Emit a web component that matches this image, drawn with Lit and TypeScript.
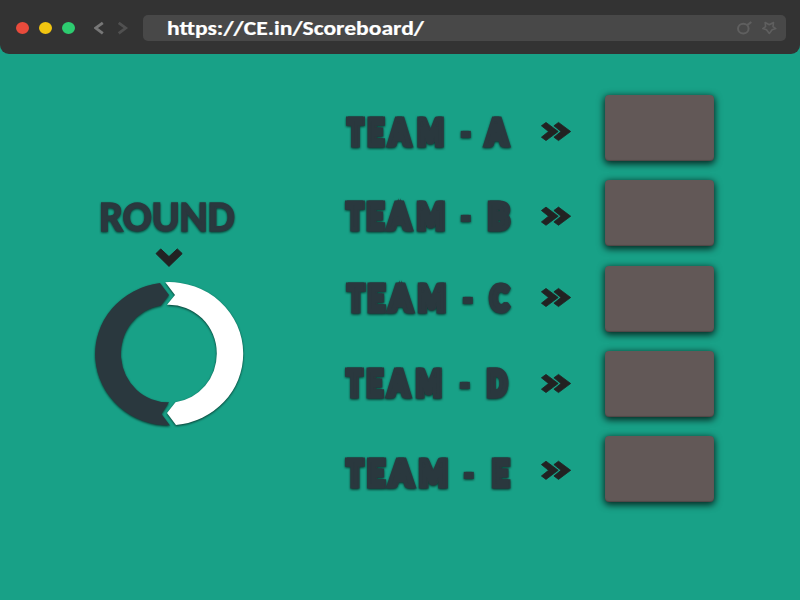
import { LitElement, html, svg, css } from "lit";
import { customElement, property } from "lit/decorators.js";

interface Team {
  letter: string;
  /** left edges and widths of T, E, A, M, the dash and the letter */
  glyphs: [number, number][];
  base: number;
  arrow: number;
}

const TEAMS: Team[] = [
  { letter: "A", base: 52, arrow: 27, glyphs: [[6, 19.5], [27.5, 17.8], [47, 26.5], [77.2, 26.5], [120.6, 11], [143.8, 27.4]] },
  { letter: "B", base: 51.6, arrow: 26.7, glyphs: [[5, 20.5], [26.5, 18.8], [46, 28], [76.7, 28], [120.6, 11], [147.6, 23.9]] },
  { letter: "C", base: 47, arrow: 22, glyphs: [[6, 20.5], [27.5, 18.8], [47, 28.5], [77.7, 28], [122.6, 11], [148.8, 22.7]] },
  { letter: "D", base: 47.5, arrow: 23, glyphs: [[5, 19.5], [26.5, 17.8], [46, 26.5], [75.7, 26], [119.6, 11], [146.6, 22.6]] },
  { letter: "E", base: 52.2, arrow: 24.8, glyphs: [[5, 20.5], [27, 19.3], [47, 29.5], [78.7, 29], [123.6, 11], [151.6, 18.9]] },
];

/** ink box of each Lato Black character, in em: left, width */
const INK: Record<string, [number, number]> = {
  T: [0.018, 0.58], E: [0.072, 0.456], A: [0.005, 0.722], M: [0.072, 0.782],
  "-": [0.043, 0.29], B: [0.072, 0.562], C: [0.036, 0.626], D: [0.072, 0.668],
};

const SIZE = 36.4;
const STROKE = 4.8;
/** sideways thickening that the name's first shadow adds */
const EXTRA = 2.4;

@customElement("browser-bar")
class BrowserBar extends LitElement {
  static styles = css`
    :host { display: flex; box-sizing: border-box; height: 54px; padding: 15px 14px 12px 16px; background: #333; border-radius: 0 0 9px 9px; }
    .dots { display: flex; gap: 10px; align-items: center; width: 78px; height: 26px; }
    .dot { width: 13px; height: 12px; border-radius: 50%; }
    .red { background: #e94b3c; }
    .yellow { background: #f2c511; }
    .green { background: #2dcc70; }
    .nav { width: 49px; height: 26px; }
    .field { flex: 1; display: flex; justify-content: space-between; height: 26px; background: #484848; border-radius: 5px; }
    .url { width: 290px; height: 26px; }
    .tools { width: 54px; height: 26px; }
    text { font: 700 20.8px Carlito, Lato, sans-serif; fill: #fff; stroke: #fff; stroke-width: 0.2px; }
  `;
  render() {
    return html`
      <div class="dots">
        <span class="dot red"></span><span class="dot yellow"></span><span class="dot green"></span>
      </div>
      <svg class="nav" viewBox="0 0 49 26" fill="none" stroke-width="2.8">
        <path d="M8.8 7.8 1.8 13l7 5.4" stroke="#777" />
        <path d="M24.7 7.8l7 5.2-7 5.4" stroke="#505050" />
      </svg>
      <div class="field">
        <svg class="url" viewBox="0 0 290 26">
          <text x="24" y="20" textLength="257" lengthAdjust="spacingAndGlyphs">https://CE.in/Scoreboard/</text>
        </svg>
        <svg class="tools" viewBox="0 0 54 26" fill="none" stroke="#5f5f5f" stroke-width="2">
          <ellipse cx="11.3" cy="13.6" rx="5.3" ry="4.9" />
          <path d="M15 10.4 19.3 7" stroke-width="2.2" />
          <path d="M33.1 7.5 37.3 9.8 41.5 7.5 41 11.7 43.8 13.6 40.1 14.8 37.3 18.4 34.5 14.8 30.8 13.6 33.6 11.7z" stroke-width="1.6" stroke-linejoin="round" />
        </svg>
      </div>
    `;
  }
}

@customElement("round-ring")
class RoundRing extends LitElement {
  static styles = css`
    :host { display: block; width: 180px; height: 250px; }
    svg { display: block; overflow: visible; }
    text { font: 700 42.5px Carlito, Lato, sans-serif; fill: #2a383e; stroke: #2a383e; stroke-width: 1.4px; }
    .raised { filter: drop-shadow(0 1.5px 1.2px rgba(0, 0, 0, 0.65)); }
  `;
  render() {
    return html`
      <svg width="180" height="250" viewBox="80 190 180 250">
        <text class="raised" x="99.2" y="230.8" textLength="135.5" lengthAdjust="spacingAndGlyphs">ROUND</text>
        <path fill="#222" stroke="#222" stroke-linejoin="round" d="M156 253.6l4.7-4.7 8.3 7.7 8.3-7.7 4.9 4.7L169 266.4z" />
        <g class="raised">
          <path fill="#2a383e" d="M160 283l9 12-8 10.5A47.5 48.7 0 0 0 169 402.3L161.5 414l8.5 11.6A74.5 71.6 0 0 1 160 283z" />
          <path fill="#fff" d="M165.3 282.2A74 71.5 0 0 1 243.2 353.5A74 71.5 0 0 1 176 425L167 413l8.5-10.8A47.8 48.8 0 0 0 216.8 353.5A47.8 48.8 0 0 0 167 304.8l8-9.8z" />
        </g>
      </svg>
    `;
  }
}

@customElement("team-row")
class TeamRow extends LitElement {
  @property({ attribute: false }) team!: Team;
  static styles = css`
    :host { display: grid; grid-template-columns: 200px 65px 109.3px; height: 66px; }
    svg { display: block; overflow: visible; }
    text { font: 900 36.4px Lato, sans-serif; fill: #2a383e; stroke: #2a383e; stroke-width: 4.8px; }
    .name { filter: drop-shadow(2.4px 0 0 #2a383e) drop-shadow(0 1.5px 1.2px rgba(0, 0, 0, 0.65)); }
    .score { border-radius: 4px; background: #625857; box-shadow: 0 2px 7px 1px rgba(0, 0, 0, 0.75), inset 0 -1px 1px rgba(0, 0, 0, 0.2); }
  `;
  render() {
    const { letter, glyphs, base, arrow } = this.team;
    return html`
      <svg width="200" height="66" viewBox="0 0 200 66">
        <g class="name">
          ${["T", "E", "A", "M", "-", letter].map((ch, i) => {
            const [left, width] = glyphs[i];
            const [bearing, ink] = INK[ch];
            const scale = (width - EXTRA) / (ink * SIZE + STROKE);
            const x = left - (bearing * SIZE - STROKE / 2) * scale;
            const dash = ch === "-";
            const y = base + 0.2 - STROKE / 2 - (dash ? 2 : 0);
            return svg`<text transform="translate(${x} ${y}) scale(${scale} ${dash ? 0.8 : 1})">${ch}</text>`;
          })}
        </g>
      </svg>
      <svg width="65" height="66" viewBox="0 0 65 66">
        <g transform="translate(1 ${arrow})" fill="#222" stroke="#222" stroke-width=".8" stroke-linejoin="round">
          <path d="M.4 3.8 5 .4l12.2 9.1L5 18.6.4 15.2 7.5 9.5z" />
          <path d="M12.9 3.8 17.5.4l12.2 9.1-12.2 9.1-4.6-3.4L20 9.5z" />
        </g>
      </svg>
      <div class="score"></div>
    `;
  }
}

@customElement("app-root")
class AppRoot extends LitElement {
  static styles = css`
    :host { display: block; width: 800px; height: 600px; overflow: hidden; background: #18a187; }
    .board { display: flex; gap: 80px; padding-left: 80px; }
    .round { padding-top: 136px; }
    .teams { display: flex; flex-direction: column; gap: 19.25px; padding-top: 41.2px; }
  `;
  render() {
    return html`
      <browser-bar></browser-bar>
      <main class="board">
        <round-ring class="round"></round-ring>
        <section class="teams">${TEAMS.map((t) => html`<team-row .team=${t}></team-row>`)}</section>
      </main>
    `;
  }
}
